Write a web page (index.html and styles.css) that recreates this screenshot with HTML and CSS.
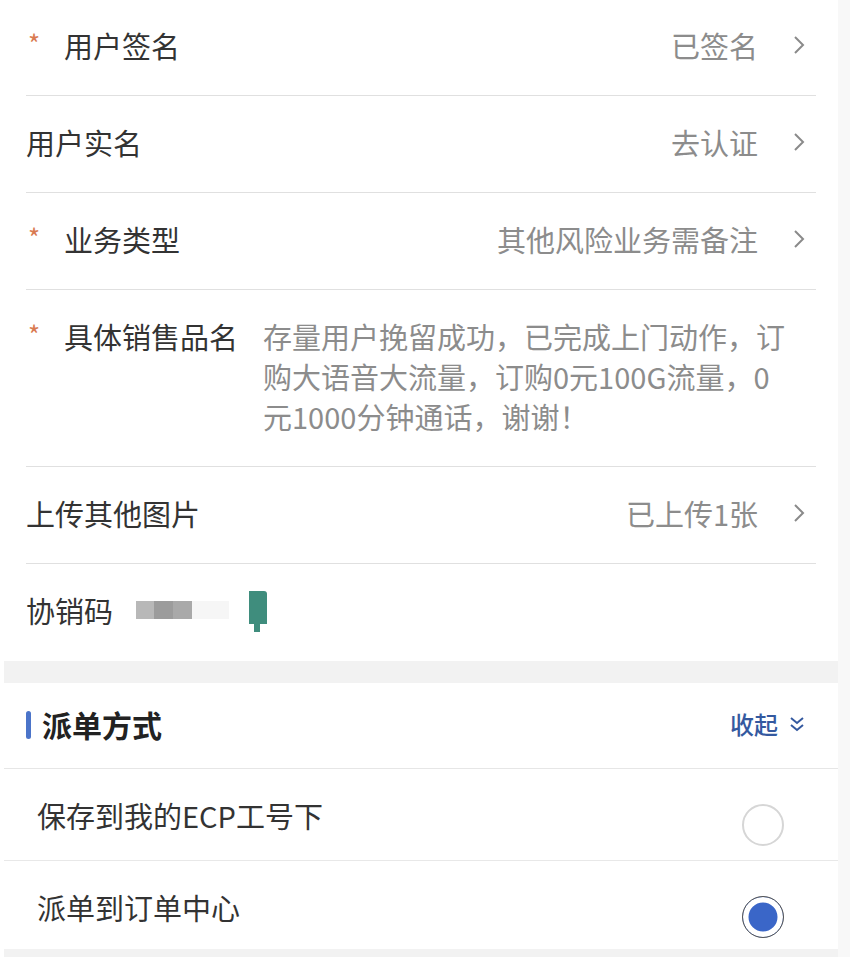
FILE: index.html
```html
<!DOCTYPE html>
<html lang="zh-CN">
<head>
  <meta charset="UTF-8">
  <title>业务登记</title>
  <link rel="stylesheet" href="styles.css">
</head>
<body>
  <div class="form">
    <div class="row">
      <span class="req">*</span>
      <span class="label">用户签名</span>
      <span class="value">已签名</span>
      <svg class="arrow" viewBox="0 0 12 20"><polyline points="2,2 10,10 2,18"/></svg>
    </div>
    <div class="row">
      <span class="label">用户实名</span>
      <span class="value">去认证</span>
      <svg class="arrow" viewBox="0 0 12 20"><polyline points="2,2 10,10 2,18"/></svg>
    </div>
    <div class="row">
      <span class="req">*</span>
      <span class="label">业务类型</span>
      <span class="value">其他风险业务需备注</span>
      <svg class="arrow" viewBox="0 0 12 20"><polyline points="2,2 10,10 2,18"/></svg>
    </div>
    <div class="row">
      <span class="req">*</span>
      <span class="label">具体销售品名</span>
      <span class="value note">存量用户挽留成功，已完成上门动作，订<br>购大语音大流量，订购0元100G流量，0<br>元1000分钟通话，谢谢！</span>
    </div>
    <div class="row">
      <span class="label">上传其他图片</span>
      <span class="value">已上传1张</span>
      <svg class="arrow" viewBox="0 0 12 20"><polyline points="2,2 10,10 2,18"/></svg>
    </div>
    <div class="row">
      <span class="label">协销码</span>
      <span class="code-blur"></span>
      <svg class="code-tag" viewBox="0 0 20 42">
        <path d="M1 1 H16 Q19 1 19 4 V34 H1 Z" fill="#3f8d7d"/>
        <rect x="6" y="34" width="6" height="8" fill="#3f8d7d"/>
      </svg>
    </div>
  </div>

  <div class="gap"></div>

  <div class="dispatch">
    <div class="dispatch-head">
      <span class="bar"></span>
      <span class="title">派单方式</span>
      <span class="fold">收起</span>
      <svg class="fold-icon" viewBox="0 0 18 18"><polyline points="3,3 9,8 15,3"/><polyline points="3,10 9,15 15,10"/></svg>
    </div>
    <div class="option">
      <span>保存到我的ECP工号下</span>
      <span class="radio"></span>
    </div>
    <div class="option">
      <span>派单到订单中心</span>
      <span class="radio checked"></span>
    </div>
  </div>

  <div class="gap"></div>
</body>
</html>
```

FILE: styles.css
```css
html {
  background-color: #f8f8f8;
}

body {
  margin: 0;
  width: 838px;
  background-color: #fff;
  font-family: "Noto Sans CJK SC", "Noto Sans", sans-serif;
  color: #333;
}

.form {
  margin-top: -1px;
  padding: 0 22px 0 26px;
}

.row {
  display: flex;
  align-items: flex-start;
  padding: 26px 0 30px;
  font-size: 29px;
  line-height: 40px;
  border-bottom: 1px solid #e0e0e0;
}

.row:last-child {
  padding-bottom: 29px;
  border-bottom: none;
}

.req {
  flex: none;
  width: 36px;
  padding-left: 2px;
  color: #d97a50;
  font-size: 26px;
  line-height: 36px;
}

.label {
  flex: none;
}

.value {
  flex: 1;
  text-align: right;
  color: #8c8c8c;
}

.value.note {
  margin-left: 25px;
  text-align: left;
}

.arrow {
  flex: none;
  width: 12px;
  height: 20px;
  margin: 10px 11px 0 35px;
  fill: none;
  stroke: #8a8a8a;
  stroke-width: 2;
}

.code-blur {
  width: 93px;
  height: 18px;
  margin: 11px 0 0 23px;
  background: linear-gradient(to right, #b8b8b8 0, #b8b8b8 18px, #9c9c9c 18px, #9c9c9c 37px, #a9a9a9 37px, #a9a9a9 56px, #f6f6f6 56px);
}

.code-tag {
  width: 20px;
  height: 42px;
  margin-left: 19px;
}

.gap {
  height: 22px;
  margin-left: 4px;
  background-color: #f2f2f2;
}

.dispatch {
  margin-left: 4px;
}

.dispatch-head {
  display: flex;
  align-items: center;
  padding: 21px 32px 24px 22px;
  line-height: 40px;
  border-bottom: 1px solid #e6e6e6;
}

.bar {
  width: 5px;
  height: 28px;
  margin-top: 2px;
  border-radius: 3px;
  background-color: #4b74c9;
}

.title {
  margin-left: 11px;
  font-size: 30px;
  font-weight: bold;
  color: #222;
}

.fold {
  margin-left: auto;
  font-size: 24px;
  font-weight: 500;
  color: #34599f;
}

.fold-icon {
  width: 18px;
  height: 18px;
  margin-left: 10px;
  fill: none;
  stroke: #34599f;
  stroke-width: 2;
}

.option {
  display: flex;
  justify-content: space-between;
  align-items: flex-start;
  padding: 26px 54px 14px 33px;
  font-size: 29px;
  line-height: 40px;
  border-bottom: 1px solid #e8e8e8;
}

.option:last-child {
  padding-bottom: 11px;
  border-bottom: none;
}

.radio {
  box-sizing: border-box;
  width: 42px;
  height: 42px;
  margin-top: 9px;
  border: 2px solid #d6d6d6;
  border-radius: 50%;
}

.radio.checked {
  border: 1.5px solid #555;
  background-color: #3a66c8;
  box-shadow: inset 0 0 0 5.5px #fff;
}
```
